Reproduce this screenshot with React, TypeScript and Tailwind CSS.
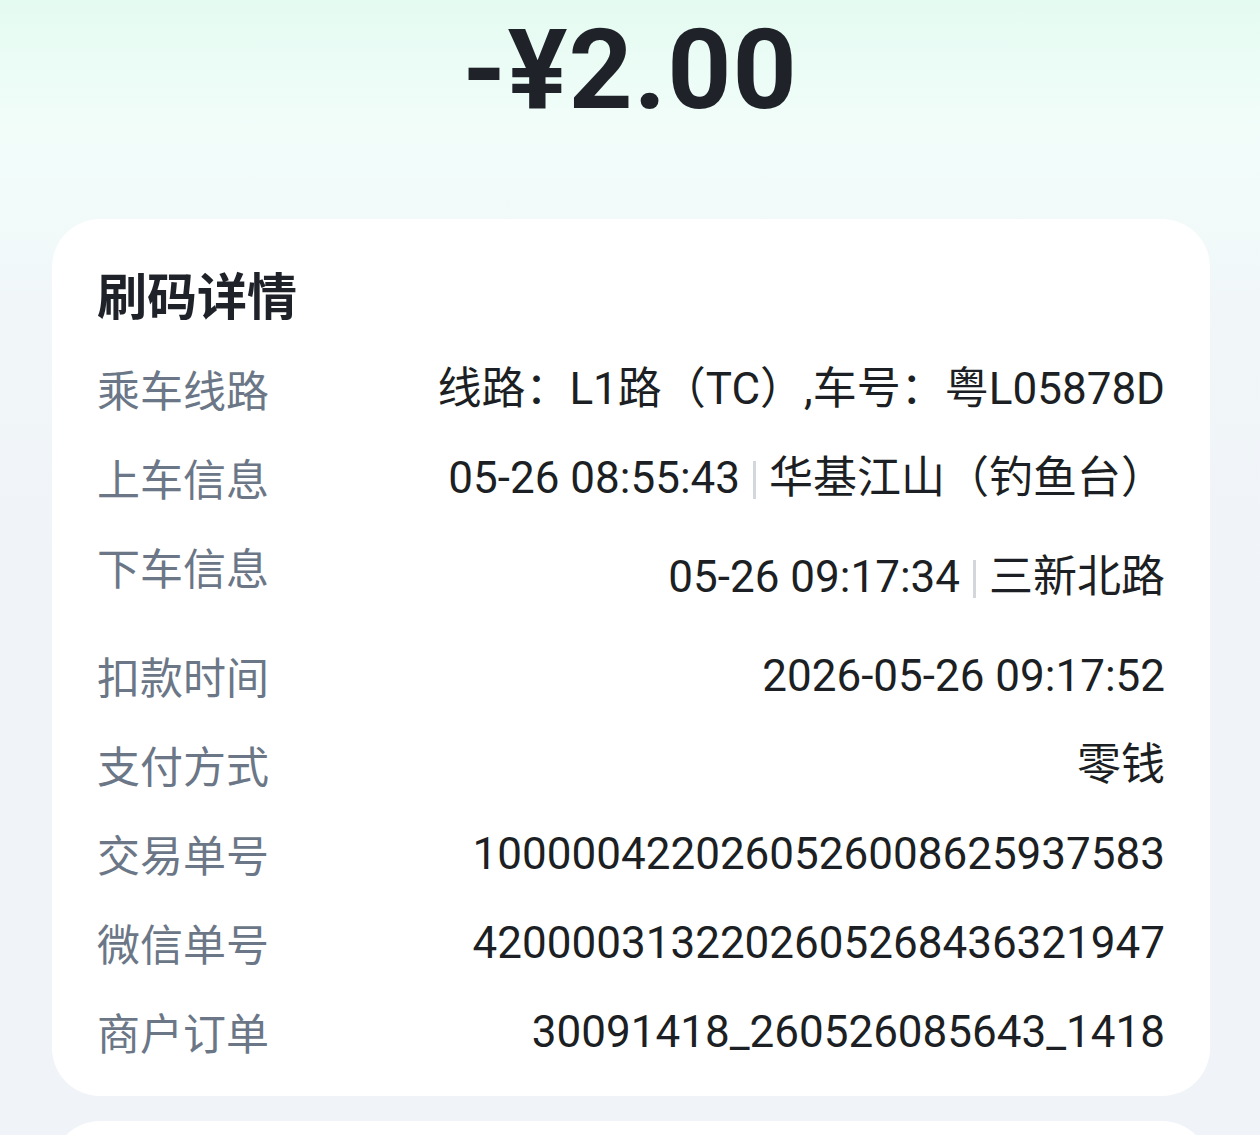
const LABEL_FONT = '"Noto Sans CJK SC", sans-serif'
const VALUE_FONT = 'Roboto, "Noto Sans CJK SC", sans-serif'

type Row = {
  label: string
  value: React.ReactNode
  tall?: boolean
}

function Sep() {
  return <span className="mx-[13px] inline-block h-[38px] w-[3px] align-[-6px] bg-[#d3d6da]" />
}

const rows: Row[] = [
  { label: "乘车线路", value: "线路：L1路（TC）,车号：粤L05878D" },
  {
    label: "上车信息",
    value: (
      <>
        05-26 08:55:43
        <Sep />
        华基江山（钓鱼台）
      </>
    ),
  },
  {
    label: "下车信息",
    tall: true,
    value: (
      <>
        05-26 09:17:34
        <Sep />
        三新北路
      </>
    ),
  },
  { label: "扣款时间", value: "2026-05-26 09:17:52" },
  { label: "支付方式", value: "零钱" },
  { label: "交易单号", value: "1000004220260526008625937583" },
  { label: "微信单号", value: "4200003132202605268436321947" },
  { label: "商户订单", value: "30091418_260526085643_1418" },
]

export default function App() {
  return (
    <div className="h-[1135px] w-[1260px] overflow-hidden bg-[linear-gradient(180deg,#e4fbf1_0px,#f2fdfa_130px,#f1f7f9_300px,#f0f3f8_600px)]">
      <div
        className="flex h-[219px] items-start justify-center pt-[14px] text-[112px] font-bold leading-[112px] tracking-[1px] text-[#1f2329]"
        style={{ fontFamily: VALUE_FONT }}
      >
        <span>-¥2.00</span>
      </div>

      <div className="ml-[52px] mr-[50px] rounded-[48px] bg-white px-[45px] pb-[19px] pt-[44px]">
        <div
          className="mb-[22px] text-[50px] font-bold leading-[60px] text-[#1f2329]"
          style={{ fontFamily: LABEL_FONT }}
        >
          刷码详情
        </div>
        {rows.map((row) => (
          <div
            key={row.label}
            className={`flex items-start justify-between ${row.tall ? "h-[109px]" : "h-[89px]"}`}
          >
            <span
              className="shrink-0 text-[43px] leading-[87px] text-[#6b7787]"
              style={{ fontFamily: LABEL_FONT }}
            >
              {row.label}
            </span>
            <span
              className={`whitespace-nowrap text-[44px] leading-[89px] text-[#1c1f23] ${row.tall ? "mt-[10px]" : ""}`}
              style={{ fontFamily: VALUE_FONT }}
            >
              {row.value}
            </span>
          </div>
        ))}
      </div>

      <div className="ml-[52px] mr-[50px] mt-[25px] h-[120px] rounded-[48px] bg-white" />
    </div>
  )
}
